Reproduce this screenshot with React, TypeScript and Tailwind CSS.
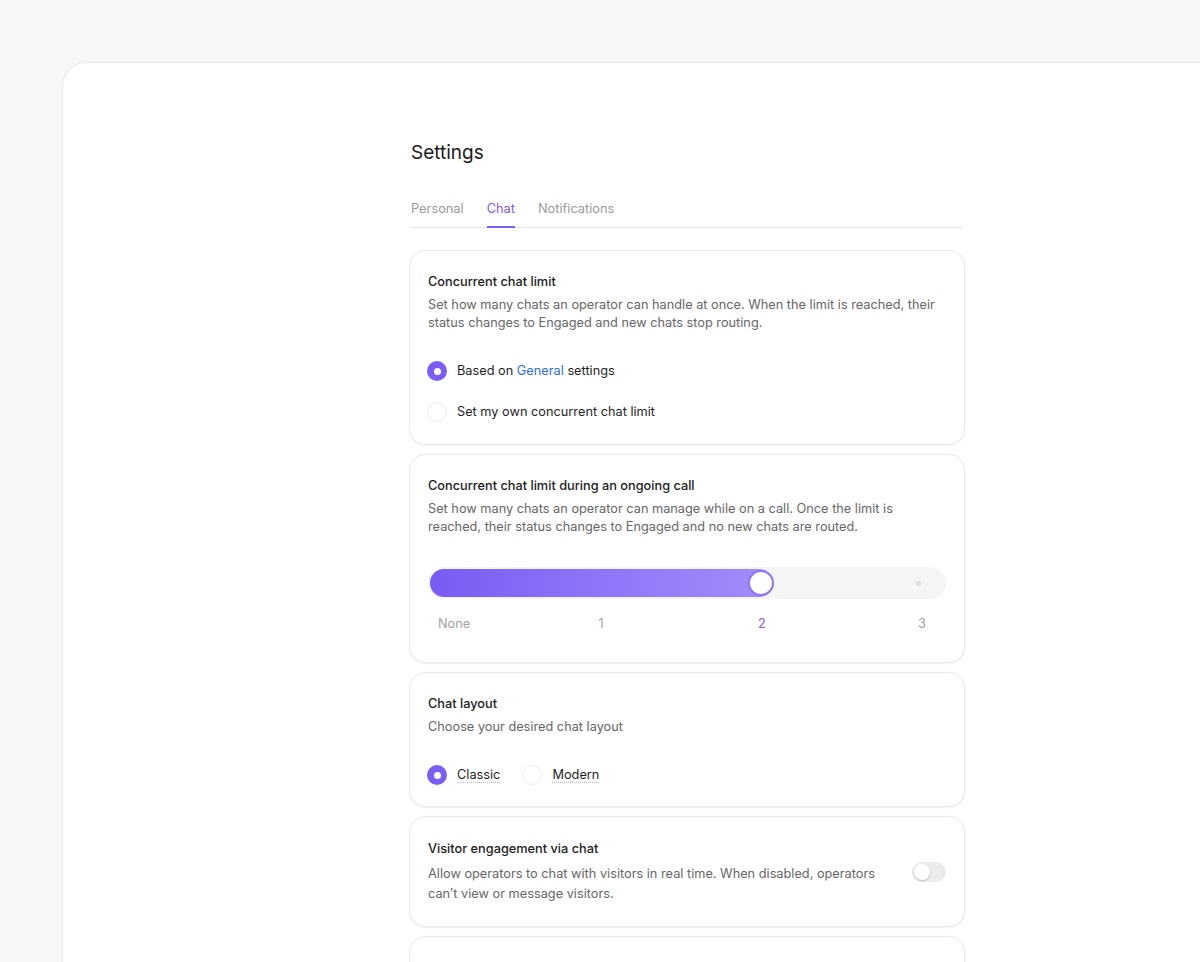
import React from 'react';

const TABS = ['Personal', 'Chat', 'Notifications'];

function Radio({ checked }: { checked?: boolean }) {
  return checked ? (
    <span className="flex h-5 w-5 shrink-0 items-center justify-center rounded-full bg-[#7b5cf5]">
      <span className="h-[7px] w-[7px] rounded-full bg-white" />
    </span>
  ) : (
    <span className="h-5 w-5 shrink-0 rounded-full border border-[#ececec] bg-white" />
  );
}

function Card({ children, className = '' }: { children: React.ReactNode; className?: string }) {
  return (
    <div className={`rounded-[16px] border border-[#e9e9e9] bg-white px-[18px] shadow-[0_1px_2px_rgba(0,0,0,0.06)] ${className}`}>
      {children}
    </div>
  );
}

function Title({ children }: { children: React.ReactNode }) {
  return <div className="text-[12.75px] leading-5 font-medium text-[#1c1c1c]">{children}</div>;
}

function Desc({ children, className = '' }: { children: React.ReactNode; className?: string }) {
  return <p className={`mt-1 text-[12.75px] leading-[18px] text-[#666] ${className}`}>{children}</p>;
}

const STEPS = [
  { label: 'None', left: 26 },
  { label: '1', left: 173 },
  { label: '2', left: 334, active: true },
  { label: '3', left: 494 },
];

export default function App() {
  return (
    <div className="h-[962px] overflow-hidden bg-[#f7f7f7] font-['Inter','Noto_Sans',sans-serif]">
      <div className="ml-[62px] mt-[62px] h-[1000px] rounded-tl-[24px] border-l border-t border-[#e8e8e8] bg-white pl-[348px] pt-[76px]">
        <div className="w-[552px]">
          <h1 className="text-[19px] leading-7 text-[#1a1a1a]">Settings</h1>
          <div className="mt-[32px] flex gap-[23px] border-b border-[#e6e6e6]">
            {TABS.map((t) => (
              <div
                key={t}
                className={`-mb-px border-b-2 pb-[7px] text-[12.8px] leading-5 ${t === 'Chat' ? 'border-[#7b5cf5] text-[#7b5cf5]' : 'border-transparent text-[#9a9a9a]'}`}
              >
                {t}
              </div>
            ))}
          </div>
        </div>

        <div className="-ml-[2px] mt-[22px] flex w-[556px] flex-col gap-[9px]">
          <Card className="pb-[22px] pt-[21px]">
            <Title>Concurrent chat limit</Title>
            <Desc>
              Set how many chats an operator can handle at once. When the limit is reached, their status changes to
              Engaged and new chats stop routing.
            </Desc>
            <div className="mt-[29px] flex flex-col gap-[21px]">
              <label className="-ml-[1px] flex items-center gap-[10px] text-[12.75px] leading-5 text-[#1f1f1f]">
                <Radio checked />
                <span>
                  Based on <span className="text-[#2b6fe0]">General</span> settings
                </span>
              </label>
              <label className="-ml-[1px] flex items-center gap-[10px] text-[12.75px] leading-5 text-[#1f1f1f]">
                <Radio />
                <span>Set my own concurrent chat limit</span>
              </label>
            </div>
          </Card>

          <Card className="pb-[29px] pt-[21px]">
            <Title>Concurrent chat limit during an ongoing call</Title>
            <Desc>
              Set how many chats an operator can manage while on a call. Once the limit is reached, their status changes
              to Engaged and no new chats are routed.
            </Desc>
            <div className="relative mt-[31px] h-8 rounded-full bg-[#f5f5f5]">
              <div className="absolute left-[2px] top-[2px] h-[28px] w-[343px] rounded-full bg-gradient-to-r from-[#7a5bf4] to-[#a48cfb]" />
              <div className="absolute left-[320px] top-[3px] h-[26px] w-[26px] rounded-full border-[2px] border-[#8f74f8] bg-white" />
              <div className="absolute left-[488px] top-[14px] h-[5px] w-[5px] rounded-full bg-[#dedede]" />
            </div>
            <div className="relative mt-[16px] h-[18px] text-[12.75px] leading-[18px]">
              {STEPS.map((s) => (
                <span
                  key={s.label}
                  className={`absolute top-0 -translate-x-1/2 ${s.active ? 'text-[#7b5cf5]' : 'text-[#a3a3a3]'}`}
                  style={{ left: s.left }}
                >
                  {s.label}
                </span>
              ))}
            </div>
          </Card>

          <Card className="pb-[21px] pt-[21px]">
            <Title>Chat layout</Title>
            <Desc>Choose your desired chat layout</Desc>
            <div className="mt-[29px] flex items-center gap-[22px] text-[12.75px] leading-5 text-[#1f1f1f]">
              <label className="-ml-[1px] flex items-center gap-[10px]">
                <Radio checked />
                <span className="underline decoration-[#bdbdbd] decoration-dotted underline-offset-[3px]">Classic</span>
              </label>
              <label className="flex items-center gap-[10px]">
                <Radio />
                <span className="underline decoration-[#bdbdbd] decoration-dotted underline-offset-[3px]">Modern</span>
              </label>
            </div>
          </Card>

          <Card className="pb-[22px] pt-[22px]">
            <div className="flex items-start justify-between">
              <div className="w-[460px]">
                <Title>Visitor engagement via chat</Title>
                <p className="mt-[5px] text-[12.75px] leading-5 text-[#666]">
                  Allow operators to chat with visitors in real time. When disabled, operators can’t view or message
                  visitors.
                </p>
              </div>
              <div className="mt-[23px] flex h-5 w-[34px] items-center rounded-full bg-[#ebebeb] px-[2px]">
                <span className="h-4 w-4 rounded-full bg-white shadow-[0_1px_2px_rgba(0,0,0,0.2)]" />
              </div>
            </div>
          </Card>

          <Card className="h-[80px]">
            <div />
          </Card>
        </div>
      </div>
    </div>
  );
}
